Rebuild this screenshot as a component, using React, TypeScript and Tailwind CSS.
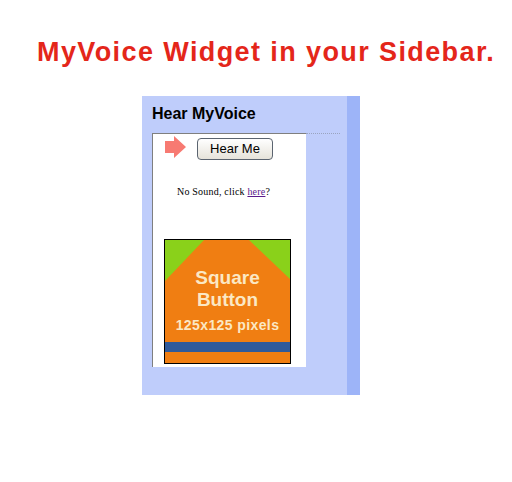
export default function App() {
  return (
    <div className="w-[512px] h-[482px] bg-white" style={{ fontFamily: '"Liberation Sans", Arial, sans-serif' }}>
      <div className="pt-[37px] pl-[37px]">
        <h1 className="text-[27px] leading-[30px] font-bold tracking-[1.4px] text-[#e4261a]">MyVoice Widget in your Sidebar.</h1>
      </div>

      <div className="ml-[142px] mt-[29px] flex w-[218px] h-[299px]">
        <div className="w-[205px] bg-[#bfcdfb] flex flex-col">
          <h2 className="pl-[10px] pt-[8px] text-[16px] leading-[19px] font-bold text-black">Hear MyVoice</h2>
          <div className="mt-[10px] flex items-start">
            <div className="ml-[10px] w-[154px] h-[234px] bg-white border-l border-t border-[#7f7f7f] flex flex-col">
              <div className="flex items-start pl-[12px] pt-[1px]">
                <svg width="22" height="22" viewBox="0 0 22 22" className="mt-[1px]">
                  <path d="M0 5 L9 5 L9 0 L21 11 L9 22 L9 17 L0 17 Z" fill="#f77a72" />
                </svg>
                <button className="ml-[10px] mt-[3px] w-[76px] h-[22px] rounded-[4px] border border-[#5b6470] bg-gradient-to-b from-white to-[#e6e3da] text-[13px] leading-[20px] text-black">
                  Hear Me
                </button>
              </div>
              <p className="mt-[26px] pl-[24px] text-[10px] leading-[12px] text-black tracking-[0.2px]" style={{ fontFamily: '"Liberation Serif", "Times New Roman", serif' }}>
                No Sound, click <span className="text-[#5a1a8c] underline">here</span>?
              </p>
              <div className="mt-[41px] ml-[11px] w-[127px] h-[125px] border border-black bg-[#f07e12] relative overflow-hidden">
                <svg width="125" height="123" viewBox="0 0 125 123" className="absolute left-0 top-0">
                  <path d="M0 0 L39 0 L0 41 Z" fill="#8ad11a" />
                  <path d="M84 0 L125 0 L125 39 Z" fill="#8ad11a" />
                  <rect x="0" y="102" width="125" height="10" fill="#2f5a9b" />
                </svg>
                <div className="relative flex flex-col items-center pt-[27px] text-[#fbe8c4] font-bold">
                  <p className="text-center text-[19px] leading-[22px]">
                    Square
                    <br />
                    Button
                  </p>
                  <p className="mt-[6px] text-[14px] leading-[16px] tracking-[0.4px]">125x125 pixels</p>
                </div>
              </div>
            </div>
            <div className="w-[34px] border-t border-dotted border-[#9aa4c0]" />
          </div>
        </div>
        <div className="w-[13px] bg-[#9db4f8]" />
      </div>
    </div>
  );
}
